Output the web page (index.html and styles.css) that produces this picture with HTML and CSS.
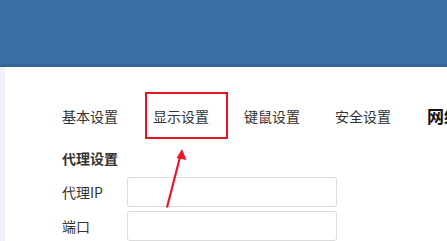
FILE: index.html
```html
<!DOCTYPE html>
<html lang="zh-CN">
<head>
    <meta charset="UTF-8">
    <title>设置</title>
    <link rel="stylesheet" href="styles.css">
</head>
<body>
    <header class="topbar"></header>
    <div class="main">
        <aside class="side"></aside>
        <section class="content">
            <nav class="tabs">
                <span class="tab">基本设置</span>
                <span class="tab">显示设置</span>
                <span class="tab">键鼠设置</span>
                <span class="tab">安全设置</span>
                <span class="tab tab-active">网络设置</span>
            </nav>
            <h3 class="group-title">代理设置</h3>
            <div class="field">
                <label class="field-label">代理IP</label>
                <input class="field-input" type="text">
            </div>
            <div class="field">
                <label class="field-label">端口</label>
                <input class="field-input" type="text">
            </div>
        </section>
    </div>

    <!-- annotation -->
    <div class="mark-box"></div>
    <svg class="mark-arrow" width="447" height="241" viewBox="0 0 447 241">
        <line x1="167" y1="207.5" x2="180.5" y2="155" stroke="#e8192c" stroke-width="2.2"/>
        <polygon points="182,149 186.5,160 176.5,158" fill="#e8192c"/>
    </svg>
</body>
</html>
```

FILE: styles.css
```css
html, body { margin: 0; padding: 0; width: 100%; height: 100%; overflow: hidden; }
body { background: #fff; color: #333; font-family: "Noto Sans CJK SC", "Liberation Sans", sans-serif; position: relative; }

.topbar { height: 67px; background: linear-gradient(to bottom, #3c6ea6 0, #3c6ea6 62px, #33628f 67px); }

.main { display: flex; height: calc(100% - 67px); }
.side { width: 5px; background: #eef2f7; flex: none; }
.content { flex: 1; padding: 39px 0 0 57px; white-space: nowrap; }

.tabs { display: flex; gap: 35px; align-items: center; height: 20px; font-size: 14px; line-height: 20px; color: #333; }
.tab-active { font-size: 17px; font-weight: bold; color: #111; margin-left: 1px; }

.group-title { margin: 22px 0 0; font-size: 14px; line-height: 20px; font-weight: bold; color: #333; }

.field { display: flex; align-items: center; height: 30px; margin-top: 9px; }
.field + .field { margin-top: 4px; }
.field-label { width: 65px; font-size: 14px; line-height: 30px; color: #333; }
.field-input { box-sizing: border-box; width: 210px; height: 30px; margin: 0; border: 1px solid #dcdcdc; border-radius: 3px; background: #fff; }

.mark-box { position: absolute; left: 145px; top: 92px; width: 79px; height: 43px; border: 2px solid #e8141e; }
.mark-arrow { position: absolute; left: 0; top: 0; pointer-events: none; }
```
